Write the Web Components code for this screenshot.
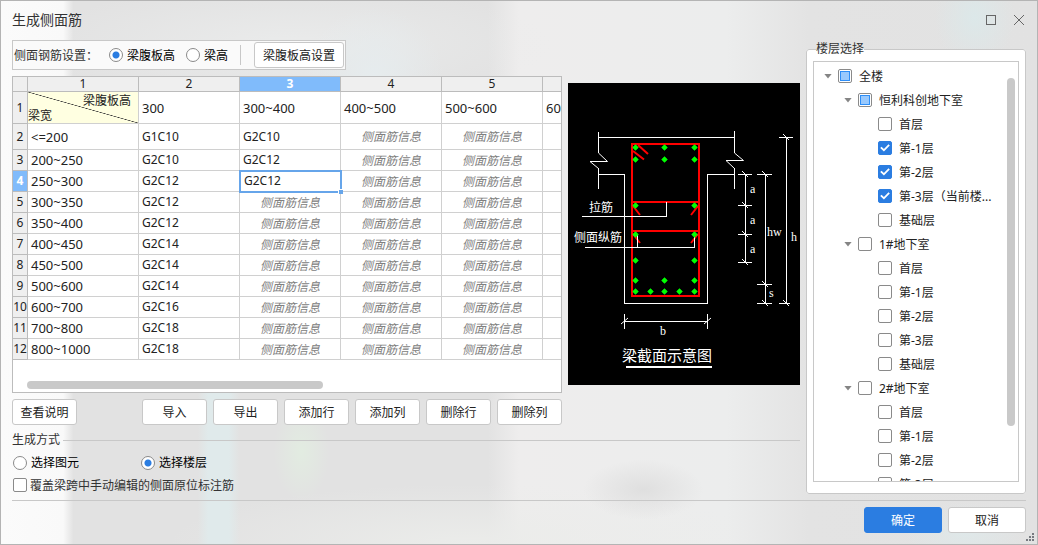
<!DOCTYPE html>
<html lang="zh-CN">
<head>
<meta charset="utf-8">
<title>生成侧面筋</title>
<style>
  html, body { margin: 0; height: 100%; }
  body {
    font: 12px/16px "Noto Sans", "Noto Sans CJK SC", sans-serif;
    color: #333;
    --line: #c8c8c8;
    --blue: #2b7de1;
    --mark: #8a8a8a;
  }
</style>
</head>
<body>
<side-bar-dialog></side-bar-dialog>

<script>
const define = (name, html, setup) => {
  const template = document.createElement('template');
  template.innerHTML = html;
  customElements.define(name, class extends HTMLElement {
    constructor() {
      super();
      this.attachShadow({ mode: 'open' }).append(template.content.cloneNode(true));
    }
    connectedCallback() {
      if (setup && !this.ready) { this.ready = true; setup(this, this.shadowRoot); }
    }
  });
};

define('push-button', `
  <style>
    :host { display: block; min-width: 65px; height: 26px; }
    button {
      box-sizing: border-box; width: 100%; height: 100%; padding: 2px 0 0;
      font: inherit; color: #222; background: #fff;
      border: 1px solid var(--line); border-radius: 3px; white-space: nowrap;
    }
    :host([primary]) button { background: var(--blue); border-color: var(--blue); color: #fff; }
  </style>
  <button type="button"><slot></slot></button>`);

define('radio-group', `
  <style>
    :host { display: flex; color: #000; }
    label { display: flex; align-items: center; gap: 4px; width: var(--option-width, 77px); flex: none; white-space: nowrap; }
    input {
      appearance: none; box-sizing: border-box; width: 14px; height: 14px; margin: 0; flex: none;
      border: 1px solid var(--mark); border-radius: 50%; background: #fff;
    }
    input:checked { background: radial-gradient(circle, var(--blue) 0 3px, #fff 4px); }
    span { padding-top: 1px; }
  </style>`, (host, root) => {
  host.getAttribute('options').split(',').forEach((text, i) => {
    const label = document.createElement('label');
    label.innerHTML = '<input type="radio" name="option"><span></span>';
    label.querySelector('span').textContent = text;
    label.querySelector('input').checked = i === Number(host.getAttribute('selected'));
    root.append(label);
  });
});

define('check-item', `
  <style>
    :host { display: flex; }
    label { display: flex; align-items: center; gap: var(--check-gap, 3px); white-space: nowrap; }
    input {
      appearance: none; box-sizing: border-box; display: grid; place-content: center;
      width: 14px; height: 14px; margin: 0; flex: none;
      border: 1px solid var(--mark); border-radius: 2px; background: #fff;
    }
    input:checked { background: var(--blue); border-color: var(--blue); }
    input:checked::before {
      content: ""; width: 12px; height: 12px; background: #fff;
      clip-path: polygon(10% 50%, 21% 39%, 41% 58%, 79% 19%, 90% 30%, 41% 80%);
    }
    input:indeterminate::before {
      content: ""; box-sizing: border-box; width: 10px; height: 10px;
      border: 1px solid #2e8ef7; background: #99c9fd;
    }
    span { padding-top: 2px; }
  </style>
  <label><input type="checkbox"><span><slot></slot></span></label>`, (host, root) => {
  const input = root.querySelector('input');
  input.checked = host.getAttribute('state') === 'on';
  input.indeterminate = host.getAttribute('state') === 'mixed';
});

define('section-title', `
  <style>
    :host { display: flex; align-items: center; gap: 3px; height: 16px; }
    i { flex: 1; height: 1px; background: var(--line); }
  </style>
  <slot></slot><i></i>`);

define('rebar-table', `
  <style>
    :host {
      display: block; box-sizing: border-box; height: 317px; overflow: hidden; min-width: 0;
      border: 1px solid #bcbcbc; background: #fff; position: relative;
    }
    table { table-layout: fixed; width: 631px; border-collapse: separate; border-spacing: 0; color: #222; }
    td, th {
      box-sizing: border-box; height: 21px; padding: 0 0 0 3px; text-align: left; font-weight: 400;
      border: solid #d0d0d0; border-width: 0 1px 1px 0; white-space: nowrap; line-height: 16px;
    }
    th { background: #efefef; border-color: #bcbcbc; text-align: center; padding: 0; font-size: 12px; }
    thead th { height: 15px; line-height: 14px; }
    tr.caption > * { height: 32px; }
    tr.first > * { height: 26px; }
    td.range { font-size: 13px; }
    td.empty { text-align: center; padding: 1px 0 0; color: #808080; font-style: italic; }
    th.current { background: #80bbfb; color: #fff; font-weight: 700; }
    td.active { outline: 2px solid #66a5ea; outline-offset: -1px; padding-left: 4px; position: relative; }
    td.active::after {
      content: ""; position: absolute; right: -3px; bottom: -3px; width: 4px; height: 4px;
      background: #66a5ea; border: 1px solid #fff; border-width: 1px 0 0 1px;
    }
    td.corner { padding: 0; background: #ffffe1; }
    .corner div {
      height: 31px; display: flex; flex-direction: column; justify-content: space-between;
      background: linear-gradient(to top right, transparent 49%, #333 50%, transparent 51%);
    }
    .corner span { line-height: 16px; }
    .corner span:first-child { align-self: flex-end; margin-right: 7px; padding-top: 1px; line-height: 15px; }
    .corner span:last-child { line-height: 15px; }
    .thumb {
      position: absolute; left: 14px; bottom: 3px; width: 54%; height: 8px;
      border-radius: 4px; background: #c9c9c9;
    }
  </style>
  <table>
    <colgroup><col style="width:15px"><col style="width:111px"><col span="5" style="width:101px"></colgroup>
    <thead><tr></tr></thead>
    <tbody></tbody>
  </table>
  <div class="thumb"></div>`, (host, root) => {
  const heads = ['', '1', '2', '3', '4', '5', ''];
  const ranges = ['300', '300~400', '400~500', '500~600', '600~700'];
  const rows = [
    ['<=200', 'G1C10', 'G2C10'], ['200~250', 'G2C10', 'G2C12'], ['250~300', 'G2C12', 'G2C12'],
    ['300~350', 'G2C12'], ['350~400', 'G2C12'], ['400~450', 'G2C14'], ['450~500', 'G2C14'],
    ['500~600', 'G2C14'], ['600~700', 'G2C16'], ['700~800', 'G2C18'], ['800~1000', 'G2C18']
  ];
  const cell = (row, tag, text, cls) => {
    const el = document.createElement(tag);
    el.textContent = text;
    if (cls) el.className = cls;
    row.append(el);
    return el;
  };
  const head = root.querySelector('thead tr');
  heads.forEach(h => cell(head, 'th', h, h === '3' ? 'current' : ''));
  const body = root.querySelector('tbody');
  const caption = body.insertRow();
  caption.className = 'caption';
  cell(caption, 'th', '1');
  cell(caption, 'td', '', 'corner').innerHTML = '<div><span>梁腹板高</span><span>梁宽</span></div>';
  ranges.forEach(r => cell(caption, 'td', r, 'range'));
  rows.forEach((values, i) => {
    const tr = body.insertRow();
    if (i === 0) tr.className = 'first';
    cell(tr, 'th', i + 2, i === 2 ? 'current' : '');
    for (let c = 0; c < 6; c++) {
      const text = values[c];
      if (c === 5) cell(tr, 'td', '');
      else if (!text) cell(tr, 'td', '侧面筋信息', 'empty');
      else cell(tr, 'td', text, c === 0 ? 'range' : (i === 2 && c === 2 ? 'active' : ''));
    }
  });
});

define('beam-diagram', `
  <style>
    :host { display: block; background: #000; }
    svg { display: block; width: 100%; }
    text { fill: #fff; font-size: 12px; font-family: "Noto Sans CJK SC", sans-serif; }
    .dim { font-family: "Liberation Serif", serif; font-size: 12px; }
    .name { font-size: 15px; }
    path { fill: none; stroke: #fff; stroke-width: 1; }
    .bar, .rule { stroke-width: 2; }
    .bar { stroke: #f00; }
    #dots { fill: #0f0; }
  </style>
  <svg viewBox="0 0 232 302" role="img" aria-label="梁截面示意图">
    <path shape-rendering="crispEdges" d="M30.5 54.5H166.5M30.5 49V70M30.5 85V106M166.5 48V70M166.5 85V106M30.5 91.5H56.5V220.5H139.5V91.5H166.5"/>
    <path d="M30.500 70L39.500 78.500H22L30.500 85.500M166.500 70L175.500 77.500H158L166.500 85.500"/>
    <path class="bar" d="M64 61H131V213H64ZM64 119H131M64 148H131M65 68L76 76.500M70 62L80 71M65 123L72 132M130 123L123 132M65 151L72 160M130 151L123 160"/>
    <path shape-rendering="crispEdges" d="M14 133.500H98.500V119M17 164.500H126.500V151M69.500 164V152"/>
    <path shape-rendering="crispEdges" d="M177.500 91V180M170 91.500H184M170 122.500H184M170 151.500H184M170 179.500H184M197.500 91V221M189 91.500H204M189 201.500H204M189 220.500H204M218.500 54V221M211 54.500H225M211 220.500H222M56.500 238.500H139.500M56.500 231V246M139.500 231V246"/>
    <path d="M174 88L180 94M174 119L180 125M174 148L180 154M174 176L180 182M194 88L200 94M194 198L200 204M194 217L200 223M215 51L221 57M215 217L221 223M53 241L60 235M136 241L143 235"/>
    <g id="dots"></g>
    <text x="21" y="129">拉筋</text>
    <text x="6" y="159">侧面纵筋</text>
    <text class="dim" x="182" y="110">a</text>
    <text class="dim" x="182" y="141">a</text>
    <text class="dim" x="182" y="170">a</text>
    <text class="dim" x="199" y="153">hw</text>
    <text class="dim" x="223" y="158">h</text>
    <text class="dim" x="201" y="214">s</text>
    <text class="dim" x="92" y="252">b</text>
    <text class="name" x="54" y="278">梁截面示意图</text>
    <path class="rule" d="M58 284H144"/>
  </svg>`, (host, root) => {
  const dots = [[67, 64], [96, 64], [126, 64], [67, 76], [96, 76], [126, 76], [67, 122], [126, 122],
    [67, 151], [126, 151], [67, 177], [126, 177], [67, 197], [96, 197], [126, 197],
    [67, 208], [82, 208], [96, 208], [111, 208], [126, 208]];
  root.querySelector('#dots').innerHTML = dots.map(([x, y]) =>
    `<path d="M${x - 1} ${y - 1}h1v-1h1v1h1v1h1v1h-1v1h-1v1h-1v-1h-1v-1h-1v-1h1z" style="fill:#0f0;stroke:#0f0"/>`).join('');
});

define('floor-tree', `
  <style>
    :host {
      display: block; box-sizing: border-box; position: relative; overflow: hidden;
      border: 1px solid var(--line); background: #fff; color: #222; --check-gap: 7px;
    }
    ul { list-style: none; margin: 0; padding: 2px 0 0 10px; }
    li { display: flex; align-items: center; height: 24px; }
    li::before { content: ""; width: 14px; height: 5px; flex: none; }
    li.open::before {
      background: linear-gradient(#858585, #858585) 0 0 / 8px 5px no-repeat;
      clip-path: polygon(0 0, 8px 0, 4px 100%);
    }
    .l2 { padding-left: 20px; }
    .l3 { padding-left: 40px; }
    .thumb {
      position: absolute; right: 3px; top: 16px; width: 8px; height: 83%;
      border-radius: 4px; background: #c9c9c9;
    }
  </style>
  <ul></ul>
  <div class="thumb"></div>`, (host, root) => {
  const floors = [
    [1, '全楼', 'mixed'], [2, '恒利科创地下室', 'mixed'], [3, '首层'], [3, '第-1层', 'on'], [3, '第-2层', 'on'],
    [3, '第-3层（当前楼...', 'on'], [3, '基础层'], [2, '1#地下室'], [3, '首层'], [3, '第-1层'], [3, '第-2层'],
    [3, '第-3层'], [3, '基础层'], [2, '2#地下室'], [3, '首层'], [3, '第-1层'], [3, '第-2层'], [3, '第-3层']
  ];
  root.querySelector('ul').innerHTML = floors.map(([level, name, state]) =>
    `<li class="l${level}${level < 3 ? ' open' : ''}"><check-item state="${state || 'off'}">${name}</check-item></li>`).join('');
});

define('group-box', `
  <style>
    :host { display: flex; min-height: 0; }
    fieldset {
      flex: 1; box-sizing: border-box; display: flex; flex-direction: column; min-width: 0; min-height: 0;
      margin: 0; padding: 3px 6px 11px; border: 1px solid var(--line); border-radius: 3px;
      background: #fff;
    }
    legend { padding: 0; margin-left: 3px; line-height: 18px; }
    ::slotted(*) { flex: 1 1 0; min-height: 0; }
  </style>
  <fieldset><legend><slot name="legend"></slot></legend><slot></slot></fieldset>`);

define('title-bar', `
  <style>
    :host { display: flex; align-items: center; box-sizing: border-box; height: 39px; padding: 0 12px 2px 11px; font-size: 14px; }
    span { flex: 1; }
    button { display: block; width: 12px; height: 12px; padding: 0; border: 0; background: none; margin-left: 16px; }
    svg { display: block; fill: none; stroke: #666; }
  </style>
  <span><slot></slot></span>
  <button type="button" aria-label="最大化"><svg width="12" height="12"><rect x="1.500" y="1.500" width="9" height="9"/></svg></button>
  <button type="button" aria-label="关闭"><svg width="12" height="12"><path d="M1 1L11 11M11 1L1 11"/></svg></button>`);

define('side-bar-dialog', `
  <style>
    :host {
      box-sizing: border-box; display: flex; flex-direction: column; height: 100vh; min-height: 545px;
      border: 1px solid #b4b4b4; position: relative;
      background:
        linear-gradient(to right, #fbfbfb 0, #f9f9f9 6%, transparent 7%),
        linear-gradient(to right, transparent 19%, #e0eaeb 20%, #e0eaeb 22%, transparent 23%) 0 100% / 100% 30% no-repeat,
        radial-gradient(ellipse 28px 50px at 29% 83%, #e2ece1, transparent),
        radial-gradient(ellipse 60px 30px at 62% 90%, #dfdfdf, transparent),
        radial-gradient(ellipse 70px 70px at 36% 14%, #e6ecee, transparent),
        radial-gradient(ellipse 40px 50px at 94% 3%, #dce8e9, transparent),
        radial-gradient(ellipse 60px 30px at 93% 98%, #dfe8e9, transparent),
        radial-gradient(ellipse 300px 60px at 45% 100%, #ebecea, transparent),
        radial-gradient(ellipse 260px 60px at 28% 8%, #eaebeb, transparent),
        linear-gradient(to right, #e2e2e2 0, #e2e2e2 47%, #eeeded 50%, #eceded 70%, #e3e3e3 78%, #e2e2e2 100%);
    }
    main {
      flex: 1; min-height: 0; display: grid; grid-template-columns: minmax(0, 1fr) 220px;
      grid-template-rows: minmax(0, 1fr); gap: 6px; padding: 0 11px;
    }
    .left { display: flex; flex-direction: column; align-items: stretch; }
    .work { display: grid; grid-template-columns: minmax(0, 1fr) 232px; gap: 6px; }
    .tools {
      box-sizing: border-box; height: 30px; display: flex; align-items: center; align-self: flex-start;
      border: 1px solid var(--line); background: #fafafa; margin-bottom: 6px; padding: 0 1px;
    }
    .tools > span { width: 95px; padding-top: 2px; white-space: nowrap; }
    .tools radio-group { width: 131px; }
    .tools hr { width: 1px; height: 20px; margin: 0 13px 0 0; border: 0; background: var(--line); }
    .tools push-button { width: 90px; }
    beam-diagram { align-self: start; margin-top: 7px; }
    .actions { display: flex; gap: 6px; margin-top: 6px; }
    .actions push-button:first-child { margin-right: auto; }
    section-title { margin-top: 7px; }
    .mode { --option-width: 128px; margin: 6px 0 0 1px; }
    .left check-item { margin: 5px 0 0 1px; }
    footer {
      display: flex; justify-content: flex-end; gap: 6px; margin: 6px 11px 11px; padding-top: 6px;
      border-top: 1px solid var(--line);
    }
    footer push-button { width: 78px; }
    .grip { position: absolute; right: 3px; bottom: 3px; fill: #777a80; }
  </style>
  <title-bar>生成侧面筋</title-bar>
  <main>
    <div class="left">
      <div class="tools">
        <span>侧面钢筋设置：</span>
        <radio-group options="梁腹板高,梁高" selected="0"></radio-group>
        <hr>
        <push-button>梁腹板高设置</push-button>
      </div>
      <div class="work">
        <div>
          <rebar-table></rebar-table>
          <div class="actions">
            <push-button>查看说明</push-button>
            <push-button>导入</push-button>
            <push-button>导出</push-button>
            <push-button>添加行</push-button>
            <push-button>添加列</push-button>
            <push-button>删除行</push-button>
            <push-button>删除列</push-button>
          </div>
        </div>
        <beam-diagram></beam-diagram>
      </div>
      <section-title>生成方式</section-title>
      <radio-group class="mode" options="选择图元,选择楼层" selected="1"></radio-group>
      <check-item>覆盖梁跨中手动编辑的侧面原位标注筋</check-item>
    </div>
    <group-box>
      <span slot="legend">楼层选择</span>
      <floor-tree></floor-tree>
    </group-box>
  </main>
  <footer>
    <push-button primary>确定</push-button>
    <push-button>取消</push-button>
  </footer>
  <svg class="grip" width="8" height="8" aria-hidden="true">
    <path d="M6 0h2v2h-2zM3 3h2v2h-2zM6 3h2v2h-2zM0 6h2v2h-2zM3 6h2v2h-2zM6 6h2v2h-2z"/>
  </svg>`);
</script>
</body>
</html>
